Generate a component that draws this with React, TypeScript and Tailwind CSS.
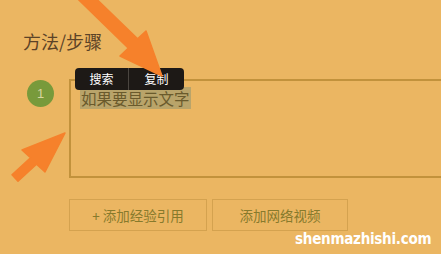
import React from "react";

const cjk = "font-['Noto_Sans_CJK_SC','Noto_Sans',sans-serif]";

const Arrows = () => (
  <svg className="absolute inset-0 pointer-events-none" width="441" height="254" viewBox="0 0 441 254">
    <polygon
      points="75.4,-3.4 128.4,48.1 120,56 162,76 146,31 137.6,38.9 84.6,-12.6"
      fill="#f6812b"
      stroke="#f6812b"
      strokeLinejoin="round"
      strokeWidth="1.5"
    />
    <polygon
      points="12,174.7 30.5,157.7 22,150 65,133 45,172 36.5,164.3 18,181.3"
      fill="#f6812b"
      stroke="#f6812b"
      strokeLinejoin="round"
      strokeWidth="1.5"
    />
  </svg>
);

export default function App() {
  return (
    <div className={`relative w-[441px] h-[254px] overflow-hidden bg-[#ebb662] ${cjk}`}>
      <div className="pl-[23px] pt-[30px] text-[18px] leading-[22px] text-[#5c4327]">方法/步骤</div>

      <div className="flex mt-[27px]">
        <div className="ml-[27px] mt-[1px] w-[27px] h-[27px] shrink-0 rounded-full bg-[#789a3b] flex items-center justify-center text-[13px] text-[#d9d5a0] font-['Liberation_Sans',sans-serif]">
          1
        </div>
        <div className="ml-[15px] h-[99px] w-[400px] shrink-0 border-2 border-[#c2923c] pl-[9px] pt-[5px]">
          <span className="bg-[#b9a46a] text-[#6a5a2c] text-[15.5px] leading-[20px] px-[1px]">如果要显示文字</span>
        </div>
      </div>

      <div className="flex gap-[5px] ml-[69px] mt-[21px]">
        <div className="w-[138px] h-[32px] border border-[#d4a24f] flex items-center justify-center text-[13.5px] text-[#877a2c]">
          + 添加经验引用
        </div>
        <div className="w-[136px] h-[32px] border border-[#d4a24f] flex items-center justify-center text-[13.5px] text-[#877a2c]">
          添加网络视频
        </div>
      </div>

      {/* 选中文字的弹出菜单 */}
      <div className="absolute left-[75px] top-[68px] w-[109px] h-[22px] rounded-[4px] bg-[#1d1916] flex text-[12px] text-white">
        <div className="w-[54px] flex items-center justify-center border-r border-[#4a4540]">搜索</div>
        <div className="flex-1 flex items-center justify-center">复制</div>
      </div>

      <Arrows />

      <div className="absolute left-[295px] top-[229px] origin-left scale-x-[0.94] text-white font-bold text-[16px] leading-[20px] tracking-[-0.3px] font-['DejaVu_Sans_Condensed','DejaVu_Sans',sans-serif]">
        shenmazhishi.com
      </div>
    </div>
  );
}
